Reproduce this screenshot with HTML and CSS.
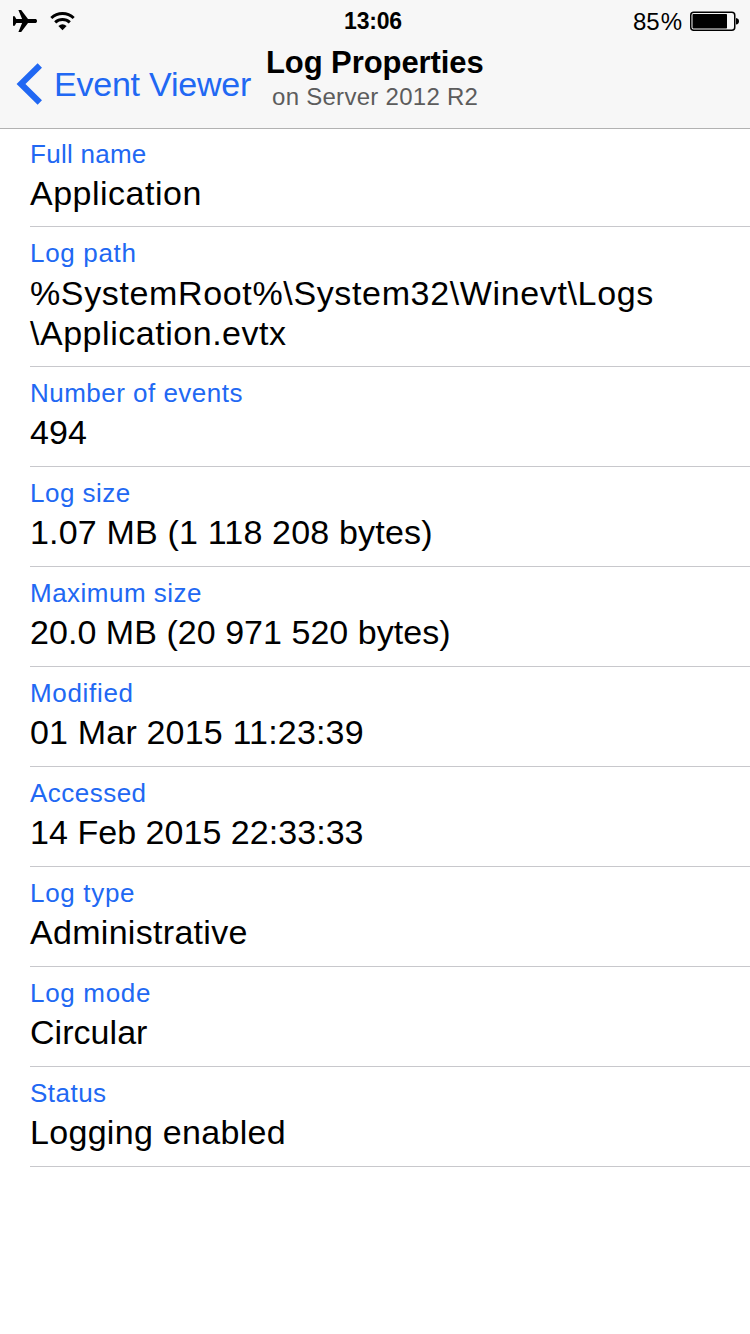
FILE: index.html
```html
<!DOCTYPE html>
<html lang="en">
<head>
<meta charset="utf-8">
<title>Log Properties</title>
<link rel="stylesheet" href="styles.css">
</head>
<body>
<header class="header">
  <div class="status">
    <div class="status-left">
      <svg width="26" height="24" viewBox="0 0 26 24"><path d="M25 12c0-1.400-.8-2-2-2h-7L9.200 1H6.400l3.700 9H4.300L2.700 7.200H1v9.600h1.700L4.300 14h5.800l-3.700 9h2.800L16 14h7c1.200 0 2-.6 2-2z"/></svg>
      <svg width="26" height="20" viewBox="0 0 26 20"><path d="M1.300 7a16.500 16.500 0 0 1 22.400 0M5.200 11.400a10.800 10.800 0 0 1 14.600 0" fill="none" stroke="#000" stroke-width="3"/><path d="M12.500 19.200l-4.100-4.100a6.300 6.300 0 0 1 8.200 0z"/></svg>
    </div>
    <div class="clock">13:06</div>
    <div class="status-right"><span class="percent">85<span class="sign">%</span></span>
      <svg width="50" height="20" viewBox="0 0 50 20"><rect x=".75" y="1.250" width="44" height="18" rx="3" fill="none" stroke="#000" stroke-width="1.500"/><rect x="2.500" y="3" width="34.500" height="14.500" rx=".7"/><path d="M46 7q3 .5 3 3.300t-3 3.300z"/></svg>
    </div>
  </div>
  <div class="nav">
    <div class="back"><svg width="28" height="44" viewBox="0 0 28 44"><path d="M24.800 3.500L6 22l18.800 18.500" fill="none" stroke="#2168f3" stroke-width="6.200"/></svg><span class="back-label">Event Viewer</span></div>
    <div class="heading"><h1>Log Properties</h1><p>on Server 2012 R2</p></div>
  </div>
</header>
<main class="list">
  <section class="row first tight-label wide"><h2>Full name</h2><p>Application</p></section>
  <section class="row tall loose-label"><h2>Log path</h2><p><span class="path">%SystemRoot%\System32\Winevt\Logs</span><br>\Application.evtx</p></section>
  <section class="row"><h2>Number of events</h2><p>494</p></section>
  <section class="row snug"><h2>Log size</h2><p>1.07 MB (1 118 208 bytes)</p></section>
  <section class="row"><h2>Maximum size</h2><p>20.0 MB (20 971 520 bytes)</p></section>
  <section class="row loose-label snug"><h2>Modified</h2><p>01 Mar 2015 11:23:39</p></section>
  <section class="row"><h2>Accessed</h2><p>14 Feb 2015 22:33:33</p></section>
  <section class="row loose-label medium"><h2>Log type</h2><p>Administrative</p></section>
  <section class="row loose-label"><h2>Log mode</h2><p>Circular</p></section>
  <section class="row medium"><h2>Status</h2><p>Logging enabled</p></section>
</main>
</body>
</html>
```
FILE: styles.css
```css
* { box-sizing: border-box; }
body, h1, h2, p { margin: 0; font-weight: normal; }
body { background: #fff; color: #000; font-family: "Liberation Sans", Arial, sans-serif; height: 1334px; overflow: hidden; }
svg { display: block; }
.header { height: 129px; background: #f7f7f7; border-bottom: 1px solid #b2b2b2; }
.status { display: grid; grid-template-columns: 1fr auto 1fr; height: 40px; font-size: 24px; line-height: 40px; }
.status-left { display: flex; align-items: center; gap: 12px; padding-left: 12px; }
.clock { font-weight: bold; font-size: 23px; letter-spacing: -.2px; padding: 1px 4px 0 0; }
.status-right { display: flex; align-items: center; justify-content: flex-end; gap: 8px; padding-right: 10px; }
.percent { font-size: 24px; padding-top: 2px; }
.sign { display: inline-block; padding-left: 1px; }
.nav { display: flex; height: 88px; }
.back { display: flex; width: 266px; height: 88px; padding-left: 15px; align-items: center; color: #2168f3; }
.back-label { font-size: 34px; padding-left: 11px; white-space: nowrap; letter-spacing: -.22px; }
.heading h1 { font-size: 31px; font-weight: bold; line-height: 40px; padding-top: 3px; white-space: nowrap; letter-spacing: -.08px; }
.heading p { font-size: 24px; line-height: 28px; color: #5c5c5c; padding-left: 6px; letter-spacing: .28px; }
.list { padding-left: 30px; }
.row { height: 100px; border-bottom: 1px solid #c8c8cc; padding-top: 11px; }
.row h2 { font-size: 26px; line-height: 30px; color: #2168f3; letter-spacing: .48px; }
.row p { font-size: 34px; line-height: 40px; padding-top: 4px; white-space: nowrap; letter-spacing: .04px; }
.row.first { height: 98px; padding-top: 10px; }
.row.tall { height: 140px; }
.row.tall p { padding-top: 5px; letter-spacing: .53px; }
.tall .path { letter-spacing: .64px; }
.row.tight-label h2 { letter-spacing: .27px; }
.row.loose-label h2 { letter-spacing: .68px; }
.row.snug p { letter-spacing: .18px; }
.row.medium p { letter-spacing: .3px; }
.row.wide p { letter-spacing: .5px; }
```
